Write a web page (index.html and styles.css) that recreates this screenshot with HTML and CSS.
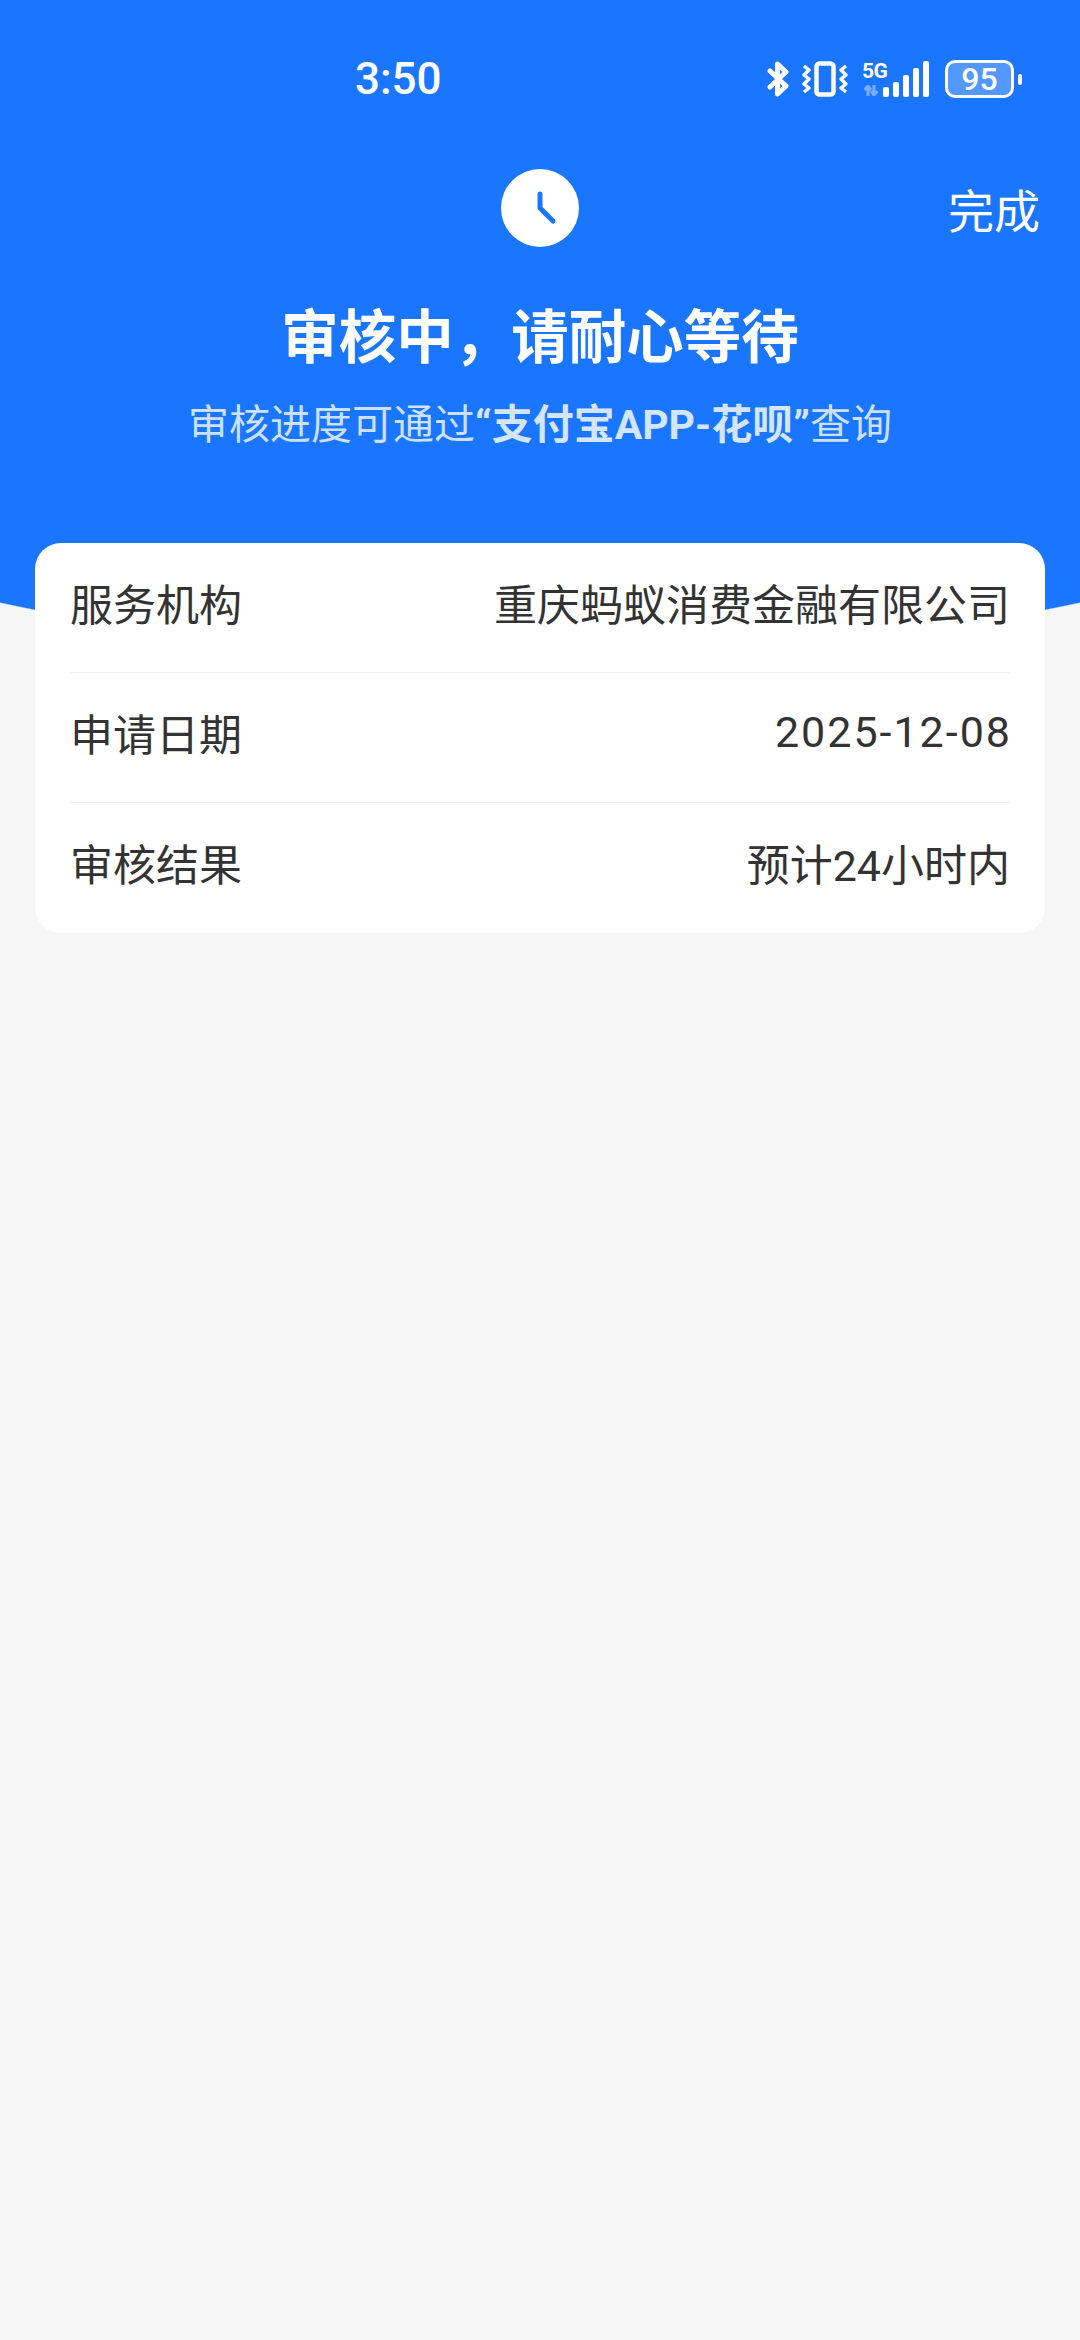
FILE: index.html
```html
<!DOCTYPE html>
<html lang="zh-CN">
<head>
    <meta charset="UTF-8">
    <meta name="viewport" content="width=device-width, initial-scale=1.0">
    <title>审核中</title>
    <link rel="stylesheet" href="styles.css">
</head>
<body>
    <div class="hero">
        <div class="status-bar">
            <span class="time">3:50</span>
            <div class="status-icons">
                <svg class="icon-bt" width="22" height="36" viewBox="0 0 22 36" fill="none" stroke="#fff" stroke-width="5" stroke-linecap="round" stroke-linejoin="round">
                    <path d="M3 10 L19 25 L10.5 33 V3 L19 11 L3 26"></path>
                </svg>
                <svg class="icon-vibrate" width="46" height="36" viewBox="0 0 46 36" fill="none" stroke="#fff" stroke-linejoin="round">
                    <rect x="14.5" y="2.5" width="17" height="31" rx="3" stroke-width="4.5"></rect>
                    <path d="M2 5 L7 9 L2 14 L7 18 L2 23 L7 27 L2 31" stroke-width="3.4"></path>
                    <path d="M44 5 L39 9 L44 14 L39 18 L44 23 L39 27 L44 31" stroke-width="3.4"></path>
                </svg>
                <div class="network">
                    <span class="net-type">5G</span>
                    <svg class="net-arrows" width="14" height="11" viewBox="0 0 14 11" fill="none" stroke="#fff" stroke-width="3">
                        <path d="M4 11 V3 M0.5 5 L4 1 L7 5"></path>
                        <path d="M10 0 V8 M7 6 L10 10 L13.5 6"></path>
                    </svg>
                </div>
                <div class="signal">
                    <i class="bar bar-1"></i>
                    <i class="bar bar-2"></i>
                    <i class="bar bar-3"></i>
                    <i class="bar bar-4"></i>
                    <i class="bar bar-5"></i>
                </div>
                <div class="battery">
                    <div class="battery-body">95</div>
                    <i class="battery-tip"></i>
                </div>
            </div>
        </div>

        <div class="nav-row">
            <span></span>
            <div class="clock">
                <svg width="78" height="78" viewBox="0 0 78 78" fill="none" stroke="#1a76ff" stroke-width="5" stroke-linecap="round" stroke-linejoin="round">
                    <path d="M39 25 V39 L52 52"></path>
                </svg>
            </div>
            <span class="done">完成</span>
        </div>

        <h1 class="title">审核中，请耐心等待</h1>
        <p class="subtitle">审核进度可通过<b>“支付宝APP-花呗”</b>查询</p>
    </div>

    <div class="card">
        <div class="row">
            <span class="label">服务机构</span>
            <span class="value">重庆蚂蚁消费金融有限公司</span>
        </div>
        <div class="row">
            <span class="label">申请日期</span>
            <span class="value date">2025-12-08</span>
        </div>
        <div class="row">
            <span class="label">审核结果</span>
            <span class="value">预计24小时内</span>
        </div>
    </div>
</body>
</html>
```

FILE: styles.css
```css
* {
    box-sizing: border-box;
    margin: 0;
    padding: 0;
    font-family: Roboto, "Noto Sans CJK SC", sans-serif;
}

body {
    background-color: #f6f6f6;
    height: 2340px;
    overflow: hidden;
}

/* blue header, the lower edge is a very wide circle */
.hero {
    height: 660px;
    background: radial-gradient(circle 2600px at 540px -1940px, #1a76ff 99.95%, transparent 100%);
    color: #fff;
}

.status-bar {
    display: flex;
    align-items: center;
    justify-content: space-between;
    height: 118px;
    padding: 40px 58px 0 355px;
}

.time {
    font-size: 44px;
    font-weight: 500;
    line-height: 78px;
}

.status-icons {
    display: flex;
    align-items: center;
    height: 38px;
}

.icon-bt {
    margin-right: 13px;
}

.icon-vibrate {
    margin-right: 14px;
}

.network {
    display: flex;
    flex-direction: column;
    width: 26px;
    height: 36px;
    align-items: flex-start;
}

.net-type {
    font-size: 21px;
    font-weight: 700;
    line-height: 20px;
    height: 24px;
    letter-spacing: -0.5px;
}

.net-arrows {
    opacity: 0.4;
    margin-left: 2px;
}

.signal {
    display: flex;
    align-items: flex-end;
    gap: 4px;
    height: 36px;
    margin-left: -5px;
    margin-right: 16px;
}

.bar {
    display: block;
    width: 6px;
    background: #fff;
    border-radius: 2px;
}

.bar-1 { height: 10px; }
.bar-2 { height: 15px; }
.bar-3 { height: 22px; }
.bar-4 { height: 29px; }
.bar-5 { height: 36px; }

.battery {
    display: flex;
    align-items: center;
    gap: 4px;
}

.battery-body {
    width: 69px;
    height: 38px;
    border: 3px solid #fff;
    border-radius: 10px;
    background: rgba(255, 255, 255, 0.25);
    font-size: 32px;
    font-weight: 500;
    line-height: 32px;
    text-align: center;
}

.battery-tip {
    display: block;
    width: 4px;
    height: 11px;
    background: #fff;
    border-radius: 2px;
}

.nav-row {
    display: grid;
    grid-template-columns: 1fr auto 1fr;
    align-items: center;
    margin-top: 51px;
    padding: 0 40px;
}

.clock {
    align-self: start;
    width: 78px;
    height: 78px;
    background: #fff;
    border-radius: 50%;
}

.clock svg {
    display: block;
}

.done {
    justify-self: end;
    padding-top: 4px;
    font-size: 46px;
    line-height: 78px;
}

.title {
    margin-top: 48px;
    font-size: 57.5px;
    font-weight: 700;
    line-height: 80px;
    text-align: center;
}

.subtitle {
    margin-top: 18px;
    font-size: 41px;
    line-height: 56px;
    text-align: center;
    color: rgba(255, 255, 255, 0.78);
}

.subtitle b {
    font-weight: 700;
    color: rgba(255, 255, 255, 0.82);
}

.card {
    margin: -117px 35px 0;
    padding: 0 35px;
    background: #fff;
    border-radius: 26px;
}

.row {
    display: flex;
    align-items: center;
    justify-content: space-between;
    height: 130px;
    padding-bottom: 12px;
    border-bottom: 1px solid #f0f0f0;
    font-size: 43px;
    color: #333;
}

.row:last-child {
    border-bottom: none;
}

.date {
    letter-spacing: 2px;
    margin-right: -2px;
}
```
